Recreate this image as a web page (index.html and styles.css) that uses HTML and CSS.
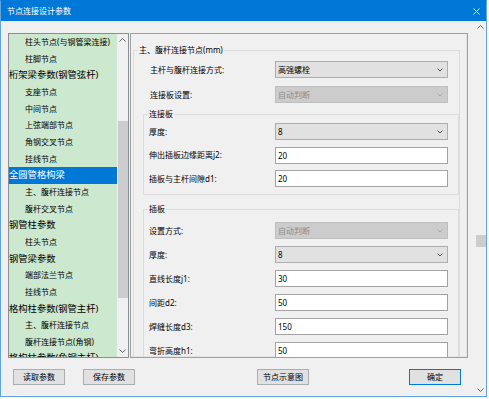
FILE: index.html
```html
<!DOCTYPE html>
<html lang="zh-CN">
<head>
    <meta charset="UTF-8">
    <title>节点连接设计参数</title>
    <link rel="stylesheet" href="styles.css">
</head>
<body>
<div class="window">
    <div class="titlebar">
        <span class="title">节点连接设计参数</span>
        <svg class="close" width="7" height="7" viewBox="0 0 7 7">
            <path d="M0.5 0.5L6.5 6.5M6.5 0.5L0.5 6.5" stroke="#fff" stroke-width="1" fill="none"/>
        </svg>
    </div>
    <div class="client">
        <div class="main">
            <div class="panels">
                <div class="tree">
                    <ul class="tree-list">
                        <li class="child">柱头节点(与钢管梁连接)</li>
                        <li class="child">柱脚节点</li>
                        <li class="parent">桁架梁参数(钢管弦杆)</li>
                        <li class="child">支座节点</li>
                        <li class="child">中间节点</li>
                        <li class="child">上弦端部节点</li>
                        <li class="child">角钢交叉节点</li>
                        <li class="child">挂线节点</li>
                        <li class="parent selected">全圆管格构梁</li>
                        <li class="child">主、腹杆连接节点</li>
                        <li class="child">腹杆交叉节点</li>
                        <li class="parent">钢管柱参数</li>
                        <li class="child">柱头节点</li>
                        <li class="parent">钢管梁参数</li>
                        <li class="child">端部法兰节点</li>
                        <li class="child">挂线节点</li>
                        <li class="parent">格构柱参数(钢管主杆)</li>
                        <li class="child">主、腹杆连接节点</li>
                        <li class="child">腹杆连接节点(角钢)</li>
                        <li class="parent">格构柱参数(角钢主杆)</li>
                    </ul>
                    <div class="scrollbar">
                        <div class="arrow">
                            <svg width="7" height="4" viewBox="0 0 7 4"><polyline points="0.5,3.5 3.5,0.5 6.5,3.5" stroke="#606060" fill="none"/></svg>
                        </div>
                        <div class="track"><div class="thumb tree-thumb"></div></div>
                        <div class="arrow">
                            <svg width="7" height="4" viewBox="0 0 7 4"><polyline points="0.5,0.5 3.5,3.5 6.5,0.5" stroke="#606060" fill="none"/></svg>
                        </div>
                    </div>
                </div>

                <div class="form-panel">
                    <div class="group group-main">
                        <div class="group-title">主、腹杆连接节点(mm)</div>
                        <div class="rows rows-main">
                            <div class="row">
                                <span class="label">主杆与腹杆连接方式:</span>
                                <div class="select">高强螺栓
                                    <svg width="6" height="4" viewBox="0 0 6 4"><polyline points="0.5,0.5 3,3 5.5,0.5" stroke="#505050" fill="none"/></svg>
                                </div>
                            </div>
                            <div class="row">
                                <span class="label">连接板设置:</span>
                                <div class="select disabled">自动判断
                                    <svg width="6" height="4" viewBox="0 0 6 4"><polyline points="0.5,0.5 3,3 5.5,0.5" stroke="#a8a8a8" fill="none"/></svg>
                                </div>
                            </div>
                        </div>

                        <div class="group group-sub group-plate">
                            <div class="group-title">连接板</div>
                            <div class="rows rows-plate">
                                <div class="row">
                                    <span class="label">厚度:</span>
                                    <div class="select">8
                                        <svg width="6" height="4" viewBox="0 0 6 4"><polyline points="0.5,0.5 3,3 5.5,0.5" stroke="#505050" fill="none"/></svg>
                                    </div>
                                </div>
                                <div class="row">
                                    <span class="label">伸出插板边缘距离j2:</span>
                                    <input class="field" type="text" value="20">
                                </div>
                                <div class="row">
                                    <span class="label">插板与主杆间隙d1:</span>
                                    <input class="field" type="text" value="20">
                                </div>
                            </div>
                        </div>

                        <div class="group group-sub group-insert">
                            <div class="group-title">插板</div>
                            <div class="rows rows-insert">
                                <div class="row">
                                    <span class="label">设置方式:</span>
                                    <div class="select disabled">自动判断
                                        <svg width="6" height="4" viewBox="0 0 6 4"><polyline points="0.5,0.5 3,3 5.5,0.5" stroke="#a8a8a8" fill="none"/></svg>
                                    </div>
                                </div>
                                <div class="row">
                                    <span class="label">厚度:</span>
                                    <div class="select">8
                                        <svg width="6" height="4" viewBox="0 0 6 4"><polyline points="0.5,0.5 3,3 5.5,0.5" stroke="#505050" fill="none"/></svg>
                                    </div>
                                </div>
                                <div class="row">
                                    <span class="label">直线长度j1:</span>
                                    <input class="field" type="text" value="30">
                                </div>
                                <div class="row">
                                    <span class="label">间距d2:</span>
                                    <input class="field" type="text" value="50">
                                </div>
                                <div class="row">
                                    <span class="label">焊缝长度d3:</span>
                                    <input class="field" type="text" value="150">
                                </div>
                                <div class="row">
                                    <span class="label">弯折高度h1:</span>
                                    <input class="field" type="text" value="50">
                                </div>
                            </div>
                        </div>
                    </div>
                </div>
            </div>

            <div class="buttons">
                <button class="btn btn-read">读取参数</button>
                <button class="btn btn-save">保存参数</button>
                <button class="btn btn-diagram">节点示意图</button>
                <button class="btn btn-ok">确定</button>
            </div>
        </div>

        <div class="scrollbar vscroll">
            <div class="arrow">
                <svg width="7" height="4" viewBox="0 0 7 4"><polyline points="0.5,3.5 3.5,0.5 6.5,3.5" stroke="#606060" fill="none"/></svg>
            </div>
            <div class="track"><div class="thumb dialog-thumb"></div></div>
            <div class="arrow">
                <svg width="7" height="4" viewBox="0 0 7 4"><polyline points="0.5,0.5 3.5,3.5 6.5,0.5" stroke="#606060" fill="none"/></svg>
            </div>
        </div>
    </div>
</div>
</body>
</html>
```

FILE: styles.css
```css
* {
    box-sizing: border-box;
}

html,
body {
    margin: 0;
    padding: 0;
}

body {
    width: 489px;
    height: 399px;
    overflow: hidden;
    background: #fff;
    font-family: "Noto Sans", "Noto Sans CJK SC", sans-serif;
    font-size: 8px;
    color: #000;
}

.window {
    width: 487px;
    height: 397px;
    border: 1px solid #62a4e0;
    border-top-color: #0078d7;
    background: #f0f0f0;
    display: flex;
    flex-direction: column;
}

/* title bar */
.titlebar {
    flex: none;
    height: 20px;
    background: #0078d7;
    color: #fff;
    display: flex;
    align-items: center;
    padding-left: 6px;
}

.title {
    flex: 1;
    line-height: 10px;
}

.close {
    margin-right: 6px;
}

.client {
    flex: 1;
    display: flex;
    min-height: 0;
}

.main {
    width: 474px;
    display: flex;
    flex-direction: column;
}

.panels {
    display: flex;
    gap: 1px;
    margin: 12px 0 0 7px;
}

/* tree on the left */
.tree {
    width: 121px;
    height: 325px;
    border: 1px solid #8a8f96;
    display: flex;
    background: #cce8cf;
}

.tree-list {
    width: 108px;
    margin: 0;
    padding: 0;
    list-style: none;
    overflow: hidden;
}

.tree-list li {
    height: 16.667px;
    line-height: 16.667px;
    white-space: nowrap;
    overflow: hidden;
}

.tree-list .child {
    padding-left: 16px;
    font-size: 8px;
}

.tree-list .parent {
    font-size: 9.3px;
}

.tree-list .selected {
    background: #0078d7;
    color: #fff;
}

/* scrollbars */
.scrollbar {
    width: 11px;
    background: #f0f0f0;
    display: flex;
    flex-direction: column;
}

.scrollbar .arrow {
    height: 12px;
    flex: none;
    display: flex;
    align-items: center;
    justify-content: center;
}

.scrollbar .track {
    flex: 1;
}

.thumb {
    width: 10px;
    margin: 0 auto;
    background: #cdcdcd;
}

.tree-thumb {
    margin-top: 75px;
    height: 177px;
}

.vscroll {
    width: 11px;
}

.dialog-thumb {
    margin-top: 202px;
    height: 12px;
}

/* form panel on the right */
.form-panel {
    width: 338px;
    height: 325px;
    border: 1px solid #a0a0a0;
    box-shadow: inset -1px -1px 0 #e3e3e3;
    overflow: hidden;
}

.group {
    border: 1px solid #dcdcdc;
    display: flex;
    flex-direction: column;
}

.group-title {
    align-self: flex-start;
    margin: -6px 0 0 4px;
    padding: 0 1px;
    line-height: 10px;
    background: #f0f0f0;
    white-space: nowrap;
}

.group-main {
    margin: 16px 7px 0 2px;
    border-bottom: none;
    height: 330px;
}

.group-sub {
    margin-left: 9px;
}

.group-plate {
    margin-top: 11px;
    padding-bottom: 7px;
}

.group-insert {
    margin-top: 14px;
    flex: 1;
    border-bottom: none;
}

.rows {
    display: flex;
    flex-direction: column;
}

.rows-main {
    margin-top: 6px;
    gap: 8px;
    padding-left: 16px;
}

.rows-main .label {
    width: 125px;
}

.rows-plate {
    margin-top: 4px;
    gap: 6.5px;
    padding-left: 5px;
}

.rows-insert {
    margin-top: 8px;
    gap: 7px;
    padding-left: 5px;
}

.row {
    display: flex;
    align-items: center;
    height: 17px;
}

.label {
    width: 126px;
    line-height: 10px;
    white-space: nowrap;
}

.select {
    width: 173px;
    height: 17px;
    border: 1px solid #adadad;
    background: #e1e1e1;
    display: flex;
    align-items: center;
    justify-content: space-between;
    padding: 0 4px 0 2px;
    line-height: 10px;
}

.select.disabled {
    background: #cccccc;
    border-color: #bfbfbf;
    color: #8d8d8d;
}

.field {
    width: 173px;
    height: 17px;
    border: 1px solid #a3a3a3;
    background: #fff;
    padding: 0 2px;
    margin: 0;
    font-family: inherit;
    font-size: 8px;
    color: #000;
    outline: none;
}

/* bottom buttons */
.buttons {
    display: flex;
    margin-top: 11px;
    padding-left: 12px;
}

.btn {
    width: 52px;
    height: 16px;
    padding: 0;
    border: 1px solid #adadad;
    background: #e1e1e1;
    font-family: inherit;
    font-size: 8px;
    line-height: 10px;
    color: #000;
}

.btn-save {
    margin-left: 18px;
}

.btn-diagram {
    margin-left: 122px;
}

.btn-ok {
    margin-left: 100px;
    border-color: #0078d7;
}
```
